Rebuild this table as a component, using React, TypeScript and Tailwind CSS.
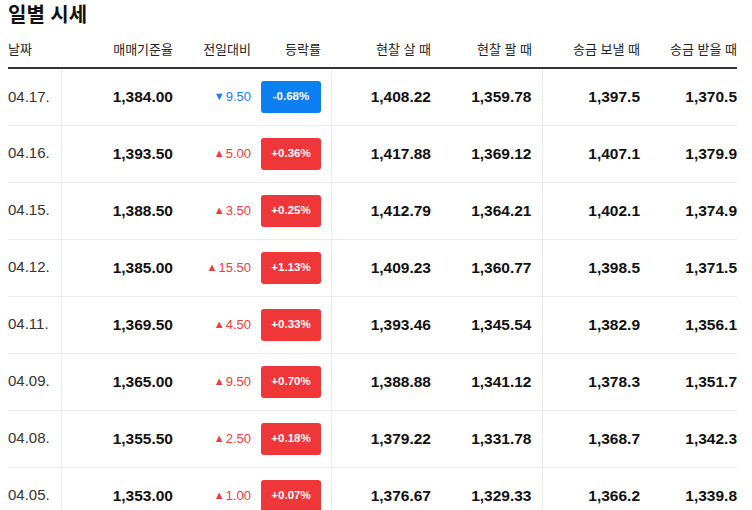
const rows = [
  { d: "04.17.", base: "1,384.00", chg: "9.50", up: false, rate: "-0.68%", buy: "1,408.22", sell: "1,359.78", send: "1,397.5", recv: "1,370.5" },
  { d: "04.16.", base: "1,393.50", chg: "5.00", up: true, rate: "+0.36%", buy: "1,417.88", sell: "1,369.12", send: "1,407.1", recv: "1,379.9" },
  { d: "04.15.", base: "1,388.50", chg: "3.50", up: true, rate: "+0.25%", buy: "1,412.79", sell: "1,364.21", send: "1,402.1", recv: "1,374.9" },
  { d: "04.12.", base: "1,385.00", chg: "15.50", up: true, rate: "+1.13%", buy: "1,409.23", sell: "1,360.77", send: "1,398.5", recv: "1,371.5" },
  { d: "04.11.", base: "1,369.50", chg: "4.50", up: true, rate: "+0.33%", buy: "1,393.46", sell: "1,345.54", send: "1,382.9", recv: "1,356.1" },
  { d: "04.09.", base: "1,365.00", chg: "9.50", up: true, rate: "+0.70%", buy: "1,388.88", sell: "1,341.12", send: "1,378.3", recv: "1,351.7" },
  { d: "04.08.", base: "1,355.50", chg: "2.50", up: true, rate: "+0.18%", buy: "1,379.22", sell: "1,331.78", send: "1,368.7", recv: "1,342.3" },
  { d: "04.05.", base: "1,353.00", chg: "1.00", up: true, rate: "+0.07%", buy: "1,376.67", sell: "1,329.33", send: "1,366.2", recv: "1,339.8" },
];

const font = { fontFamily: '"Liberation Sans", "Noto Sans CJK KR", sans-serif' };

export default function App() {
  return (
    <div className="bg-white w-[752px] h-[510px] overflow-hidden pl-2 pr-[15px]" style={font}>
      <h2 className="h-[33px] pt-[1px] text-[20px] leading-[28px] font-bold text-[#111]">일별 시세</h2>
      <table className="w-[729px] border-collapse table-fixed">
        <colgroup>
          <col className="w-[53px]" />
          <col className="w-[122px]" />
          <col className="w-[78px]" />
          <col className="w-[70px]" />
          <col className="w-[110px]" />
          <col className="w-[101px]" />
          <col className="w-[108px]" />
          <col className="w-[87px]" />
        </colgroup>
        <thead>
          <tr className="h-[35px] border-b-2 border-[#333] text-[13px] text-[#222] font-normal">
            <th className="text-left font-normal">날짜</th>
            <th className="text-right font-normal pr-[10px]">매매기준율</th>
            <th className="text-right font-normal pr-[10px]">전일대비</th>
            <th className="text-right font-normal pr-[10px]">등락률</th>
            <th className="text-right font-normal pr-[10px]">현찰 살 때</th>
            <th className="text-right font-normal pr-[10px]">현찰 팔 때</th>
            <th className="text-right font-normal pr-[10px]">송금 보낼 때</th>
            <th className="text-right font-normal">송금 받을 때</th>
          </tr>
        </thead>
        <tbody>
          {rows.map((r) => (
            <tr key={r.d} className="h-[57px] border-b border-[#ebebeb]">
              <td className="text-[15px] text-[#333]">{r.d}</td>
              <td className="border-l border-[#ebebeb] text-right pr-[10px] text-[15.5px] font-bold text-[#111]">{r.base}</td>
              <td className={`text-right pr-[10px] text-[13px] ${r.up ? "text-[#ef3b40]" : "text-[#1a7ff2]"}`}>
                <span className="text-[11px] mr-[1px] relative -top-[1px]">{r.up ? "▲" : "▼"}</span>
                {r.chg}
              </td>
              <td>
                <span
                  className={`flex items-center justify-center w-[60px] h-[32px] rounded-[3px] text-white text-[11.5px] font-bold ${r.up ? "bg-[#ef3639]" : "bg-[#0d7ff3]"}`}
                >
                  {r.rate}
                </span>
              </td>
              <td className="border-l border-[#ebebeb] text-right pr-[10px] text-[15.5px] font-bold text-[#111]">{r.buy}</td>
              <td className="text-right pr-[10px] text-[15.5px] font-bold text-[#111]">{r.sell}</td>
              <td className="border-l border-[#ebebeb] text-right pr-[10px] text-[15.5px] font-bold text-[#111]">{r.send}</td>
              <td className="text-right text-[15.5px] font-bold text-[#111]">{r.recv}</td>
            </tr>
          ))}
        </tbody>
      </table>
    </div>
  );
}
